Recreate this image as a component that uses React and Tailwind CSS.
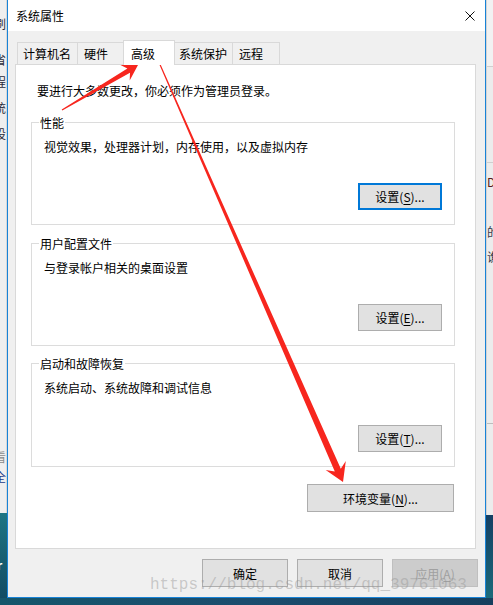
import React from 'react';

const cjk = "font-['Noto_Sans_CJK_SC','Microsoft_YaHei',sans-serif]";

// tapered arrow like the screenshot tool draws
const arrowPoints = (x1, y1, x2, y2, tailW, shaftW, headLen, headW) => {
    const dx = x2 - x1, dy = y2 - y1;
    const len = Math.hypot(dx, dy);
    const ux = dx / len, uy = dy / len;
    const px = -uy, py = ux;
    const neck = { x: x2 - ux * headLen * 0.72, y: y2 - uy * headLen * 0.72 };
    const base = { x: x2 - ux * headLen, y: y2 - uy * headLen };
    const pts = [
        [x1 + px * tailW / 2, y1 + py * tailW / 2],
        [neck.x + px * shaftW / 2, neck.y + py * shaftW / 2],
        [base.x + px * headW / 2, base.y + py * headW / 2],
        [x2, y2],
        [base.x - px * headW / 2, base.y - py * headW / 2],
        [neck.x - px * shaftW / 2, neck.y - py * shaftW / 2],
        [x1 - px * tailW / 2, y1 - py * tailW / 2],
    ];
    return pts.map(p => p[0].toFixed(1) + ',' + p[1].toFixed(1)).join(' ');
};

const Key = ({ children }) => <span className="underline underline-offset-2">{children}</span>;

const GroupBox = ({ title, text, button, height = 'h-[103px]' }) => (
    <div className={`relative ${height} w-[424px] border border-[#dcdcdc] flex flex-col pt-[15px] pl-[12px] pr-[12px] pb-[14px]`}>
        <span className="absolute left-[7px] -top-[9px] bg-white px-[1px] leading-[17px]">{title}</span>
        <div className="leading-[17px]">{text}</div>
        <div className="mt-auto self-end">{button}</div>
    </div>
);

const btnBase = 'flex items-center justify-center leading-[17px] text-black';

const App = () => {
    const tabs = [
        { label: '计算机名', w: 'w-[61px]', pl: 'pl-[5px]' },
        { label: '硬件', w: 'w-[47px]', pl: 'pl-[6px]' },
        { label: '高级', w: 'w-[52px]', pl: 'pl-[7px]', active: true },
        { label: '系统保护', w: 'w-[59px]', pl: 'pl-[4px]' },
        { label: '远程', w: 'w-[48px]', pl: 'pl-[6px]' },
    ];

    return (
        <div className={`relative w-[493px] h-[605px] overflow-hidden bg-[#16506a] text-[12px] ${cjk}`}>
            <div className="flex h-[598px]">
                {/* left strip: window behind */}
                <div className="w-[7px] flex flex-col overflow-hidden">
                    <div className="h-[513px] bg-[#efefef] border-r border-[#d8d8d8] flex flex-col text-[#2b2b3a] leading-[17px] whitespace-nowrap">
                        <span className="-ml-[6px] mt-[15px]">刷</span>
                        <span className="-ml-[6px] mt-[19px]">省</span>
                        <span className="-ml-[6px] mt-[5px]">程</span>
                        <span className="-ml-[6px] mt-[9px]">统</span>
                        <span className="-ml-[6px] mt-[9px]">设</span>
                        <span className="-ml-[6px] mt-[306px] text-[#8a8a8a]">看</span>
                        <span className="-ml-[6px] mt-[3px] text-[#1d3c8a]">全</span>
                    </div>
                    <div className="flex-1 bg-gradient-to-b from-[#1d7584] to-[#124c63] text-white font-bold leading-[14px] pt-[45px] whitespace-nowrap">
                        <span className="-ml-[3px]">r</span>
                    </div>
                </div>

                {/* dialog window */}
                <div className="w-[479px] flex flex-col border-l border-r border-b border-[#1883d7] bg-[#f0f0f0] text-black">
                    <div className="h-[31px] bg-white flex items-center justify-between pl-[8px] pr-[10px]">
                        <span className="leading-[17px]">系统属性</span>
                        <svg width="10" height="10" viewBox="0 0 10 10">
                            <path d="M0.5 0.5 L9.5 9.5 M9.5 0.5 L0.5 9.5" stroke="#111" strokeWidth="1" fill="none" />
                        </svg>
                    </div>

                    <div className="flex-1 flex flex-col pt-[9px] pl-[7px] pr-[9px]">
                        <div className="flex items-end h-[24px] pl-[2px]">
                            {tabs.map((t, i) => (
                                <div
                                    key={t.label}
                                    className={`${t.w} ${t.pl} ${i > 0 ? '-ml-px' : ''} flex items-center border-l border-t border-r border-[#d9d9d9] leading-[17px] ${t.active ? 'h-[25px] -mb-px bg-white relative z-10' : 'h-[22px] bg-[#f0f0f0]'}`}
                                >
                                    {t.label}
                                </div>
                            ))}
                        </div>

                        <div className="h-[485px] bg-white border border-[#d9d9d9] flex flex-col pt-[17px] pl-[15px]">
                            <div className="ml-[6px] leading-[17px]">要进行大多数更改，你必须作为管理员登录。</div>

                            <div className="mt-[23px]">
                                <GroupBox
                                    title="性能"
                                    text="视觉效果，处理器计划，内存使用，以及虚拟内存"
                                    button={
                                        <div className={`${btnBase} w-[84px] h-[27px] border-2 border-[#0078d7] bg-[#e1e1e1]`}>
                                            设置(<Key>S</Key>)...
                                        </div>
                                    }
                                />
                            </div>
                            <div className="mt-[18px]">
                                <GroupBox
                                    title="用户配置文件"
                                    text="与登录帐户相关的桌面设置"
                                    button={
                                        <div className={`${btnBase} w-[84px] h-[27px] border border-[#adadad] bg-[#e1e1e1]`}>
                                            设置(<Key>E</Key>)...
                                        </div>
                                    }
                                />
                            </div>
                            <div className="mt-[17px]">
                                <GroupBox
                                    title="启动和故障恢复"
                                    text="系统启动、系统故障和调试信息"
                                    height="h-[104px]"
                                    button={
                                        <div className={`${btnBase} w-[84px] h-[27px] border border-[#adadad] bg-[#e1e1e1]`}>
                                            设置(<Key>T</Key>)...
                                        </div>
                                    }
                                />
                            </div>
                            <div className="w-[424px] flex justify-end mt-[17px] pr-[1px]">
                                <div className={`${btnBase} w-[147px] h-[28px] border border-[#adadad] bg-[#e1e1e1]`}>
                                    环境变量(<Key>N</Key>)...
                                </div>
                            </div>
                        </div>

                        <div className="flex justify-end gap-[9px] mt-[10px] -mr-[2px]">
                            <div className={`${btnBase} w-[86px] h-[28px] border border-[#adadad] bg-[#e1e1e1]`}>确定</div>
                            <div className={`${btnBase} w-[86px] h-[28px] border border-[#adadad] bg-[#e1e1e1]`}>取消</div>
                            <div className={`${btnBase} w-[86px] h-[28px] border border-[#bfbfbf] bg-[#cccccc] !text-[#a0a0a0]`}>
                                应用(<Key>A</Key>)
                            </div>
                        </div>
                    </div>
                </div>

                {/* right strip: window behind */}
                <div className="w-[7px] flex flex-col overflow-hidden">
                    <div className="h-[515px] bg-[#ececec] border-l border-[#d4d4d4] flex flex-col leading-[17px] whitespace-nowrap">
                        <div className="h-[67px] bg-[#f2f2f2] border-b border-[#cfcfcf]" />
                        <div className="h-[96px] border-b border-[#cfcfcf]" />
                        <span className="mt-[10px] text-[#5a1a1a]">D</span>
                        <span className="mt-[33px] text-[#3a3a4a]">的</span>
                        <span className="mt-[8px] text-[#3a3a4a]">谯</span>
                        <div className="mt-[158px] border-b border-[#bdbdbd]" />
                    </div>
                    <div className="flex-1 bg-gradient-to-b from-[#143f63] to-[#1b6a7a]" />
                </div>
            </div>
            <div className="h-[7px] bg-gradient-to-r from-[#15566b] via-[#1b4d6e] to-[#163f5e]" />

            {/* watermark */}
            <div className="absolute left-[150px] top-[575px] font-['Liberation_Mono',monospace] text-[16px] leading-[20px] whitespace-nowrap text-[rgba(150,150,150,0.45)] pointer-events-none">
                https://blog.csdn.net/qq_39761063
            </div>

            {/* red annotation arrows */}
            <svg className="absolute inset-0 pointer-events-none" width="493" height="605" viewBox="0 0 493 605">
                <polygon points={arrowPoints(62, 110, 138, 65, 1, 5, 15, 18)} fill="#f7261e" />
                <polygon points={arrowPoints(158, 60, 343, 482, 1, 6.5, 18, 22)} fill="#f7261e" />
            </svg>
        </div>
    );
};

export default App;
